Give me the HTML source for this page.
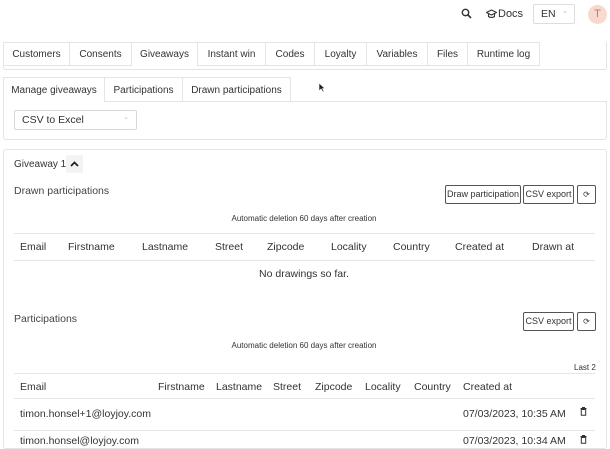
<!DOCTYPE html>
<html><head><meta charset="utf-8"><style>
*{box-sizing:border-box;margin:0;padding:0}
body{width:610px;height:440px;overflow:hidden;background:#fff;font-family:"Liberation Sans",sans-serif;color:#333;font-size:10.5px;position:relative}
.a{position:absolute;white-space:nowrap}
.b{position:absolute;border:1px solid #e4e4e4}
.t{position:absolute;top:42px;height:24px;border:1px solid #e4e4e4;border-bottom:none;font-size:10px;line-height:23px;text-align:center;background:#fff;white-space:nowrap}
.btn{position:absolute;border:1px solid #555;border-radius:2px;font-size:9px;line-height:17px;text-align:center;background:#fff;color:#333;white-space:nowrap;overflow:hidden}
.hl{position:absolute;left:14px;width:581px;height:1px;background:#e6e6e6}
</style></head><body>
<svg class="a" style="left:461px;top:8px" width="11" height="11" viewBox="0 0 11 11"><circle cx="4.5" cy="4.5" r="3.2" fill="none" stroke="#333" stroke-width="1.4"/><line x1="7" y1="7" x2="10" y2="10" stroke="#333" stroke-width="1.6"/></svg>
<svg class="a" style="left:486px;top:9px" width="11" height="10" viewBox="0 0 11 10"><path d="M0.5 3.5 L5.5 1 L10.5 3.5 L5.5 6 Z" fill="none" stroke="#333" stroke-width="1.1"/><path d="M2.5 4.7 V7.5 Q5.5 9.5 8.5 7.5 V4.7" fill="none" stroke="#333" stroke-width="1.1"/></svg>
<div class="a" style="left:498px;top:8px;font-size:11px">Docs</div>
<div class="b" style="left:533px;top:4px;width:42px;height:20px;border-radius:2px;border-color:#ddd"></div>
<div class="a" style="left:541px;top:8px;font-size:10.5px">EN</div>
<div class="a" style="left:562px;top:7px;font-size:7px;color:#bbb">&#8964;</div>
<div class="a" style="left:588px;top:5px;width:19px;height:19px;border-radius:50%;background:#f7d9d0;color:#d6735c;font-size:11px;line-height:19px;text-align:center">T</div>
<div class="b" style="left:3px;top:42px;width:604px;height:28px;border-top:none;border-radius:0 0 3px 3px"></div>
<div class="t" style="left:3px;width:67px;border-bottom:1px solid #e4e4e4">Customers</div>
<div class="t" style="left:69px;width:63px;border-bottom:1px solid #e4e4e4">Consents</div>
<div class="t" style="left:131px;width:67px">Giveaways</div>
<div class="t" style="left:197px;width:69px;border-bottom:1px solid #e4e4e4">Instant win</div>
<div class="t" style="left:265px;width:50px;border-bottom:1px solid #e4e4e4">Codes</div>
<div class="t" style="left:314px;width:53px;border-bottom:1px solid #e4e4e4">Loyalty</div>
<div class="t" style="left:366px;width:62px;border-bottom:1px solid #e4e4e4">Variables</div>
<div class="t" style="left:427px;width:41px;border-bottom:1px solid #e4e4e4">Files</div>
<div class="t" style="left:467px;width:73px;border-bottom:1px solid #e4e4e4">Runtime log</div>
<div class="b" style="left:3px;top:101px;width:604px;height:39px;border-radius:0 0 3px 3px"></div>
<div class="t" style="top:77px;left:3px;width:102px;height:25px;line-height:25px">Manage giveaways</div>
<div class="t" style="top:77px;left:104px;width:79px;height:25px;line-height:25px;border-bottom:1px solid #e4e4e4">Participations</div>
<div class="t" style="top:77px;left:182px;width:109px;height:25px;line-height:25px;border-bottom:1px solid #e4e4e4">Drawn participations</div>
<svg class="a" style="left:318px;top:82px" width="8" height="11" viewBox="0 0 8 11"><path d="M1 1 V9 L3 7 L5 10 L6 9.5 L4.5 6.5 L7 6.5 Z" fill="#222" stroke="#fff" stroke-width=".6"/></svg>
<div class="b" style="left:14px;top:110px;width:123px;height:20px;border-radius:2px;border-color:#d8d8d8"></div>
<div class="a" style="left:22px;top:114px;font-size:10.5px">CSV to Excel</div>
<div class="a" style="left:123px;top:113px;font-size:7px;color:#bbb">&#8964;</div>
<div class="b" style="left:3px;top:149px;width:604px;height:300px;border-radius:3px"></div>
<div class="a" style="left:14px;top:159px;font-size:10px">Giveaway 1</div>
<div class="a" style="left:66px;top:155px;width:17px;height:18px;background:#f3f3f3;border-radius:2px"></div>
<svg class="a" style="left:69px;top:160px" width="11" height="8" viewBox="0 0 11 8"><path d="M2 6 L5.5 2.5 L9 6" fill="none" stroke="#222" stroke-width="1.8"/></svg>
<div class="a" style="left:14px;top:185px;color:#444">Drawn participations</div>
<div class="btn" style="left:445px;top:185px;width:76px;height:19px">Draw participation</div>
<div class="btn" style="left:523px;top:185px;width:51px;height:19px">CSV export</div>
<div class="btn" style="left:577px;top:185px;width:19px;height:19px;font-size:8px">&#10227;</div>
<div class="a" style="left:0;width:608px;text-align:center;top:214px;font-size:8px">Automatic deletion 60 days after creation</div>
<div class="hl" style="top:233px"></div>
<div class="a" style="top:241px;left:20px">Email</div>
<div class="a" style="top:241px;left:68px">Firstname</div>
<div class="a" style="top:241px;left:142px">Lastname</div>
<div class="a" style="top:241px;left:215px">Street</div>
<div class="a" style="top:241px;left:267px">Zipcode</div>
<div class="a" style="top:241px;left:331px">Locality</div>
<div class="a" style="top:241px;left:393px">Country</div>
<div class="a" style="top:241px;left:455px">Created at</div>
<div class="a" style="top:241px;left:532px">Drawn at</div>
<div class="hl" style="top:260px"></div>
<div class="a" style="left:0;width:608px;text-align:center;top:268px">No drawings so far.</div>
<div class="a" style="left:14px;top:313px;color:#444">Participations</div>
<div class="btn" style="left:523px;top:312px;width:51px;height:19px">CSV export</div>
<div class="btn" style="left:577px;top:312px;width:19px;height:19px;font-size:8px">&#10227;</div>
<div class="a" style="left:0;width:608px;text-align:center;top:341px;font-size:8px">Automatic deletion 60 days after creation</div>
<div class="a" style="left:574px;top:363px;font-size:8px">Last 2</div>
<div class="hl" style="top:373px"></div>
<div class="a" style="top:381px;left:20px">Email</div>
<div class="a" style="top:381px;left:158px">Firstname</div>
<div class="a" style="top:381px;left:216px">Lastname</div>
<div class="a" style="top:381px;left:273px">Street</div>
<div class="a" style="top:381px;left:315px">Zipcode</div>
<div class="a" style="top:381px;left:365px">Locality</div>
<div class="a" style="top:381px;left:414px">Country</div>
<div class="a" style="top:381px;left:463px">Created at</div>
<div class="hl" style="top:398px"></div>
<div class="a" style="top:408px;left:20px">timon.honsel+1@loyjoy.com</div>
<div class="a" style="top:408px;left:463px">07/03/2023, 10:35 AM</div>
<svg class="a" style="left:580px;top:407px" width="7" height="9" viewBox="0 0 7 9"><path d="M0.5 1.5 H6.5 M2.5 1.5 V0.5 H4.5 V1.5 M1.3 2.5 H5.7 V8.3 H1.3 Z" fill="none" stroke="#333" stroke-width="1"/></svg>
<div class="hl" style="top:430px"></div>
<div class="a" style="top:435px;left:20px">timon.honsel@loyjoy.com</div>
<div class="a" style="top:435px;left:463px">07/03/2023, 10:34 AM</div>
<svg class="a" style="left:580px;top:435px" width="7" height="9" viewBox="0 0 7 9"><path d="M0.5 1.5 H6.5 M2.5 1.5 V0.5 H4.5 V1.5 M1.3 2.5 H5.7 V8.3 H1.3 Z" fill="none" stroke="#333" stroke-width="1"/></svg>
</body></html>
